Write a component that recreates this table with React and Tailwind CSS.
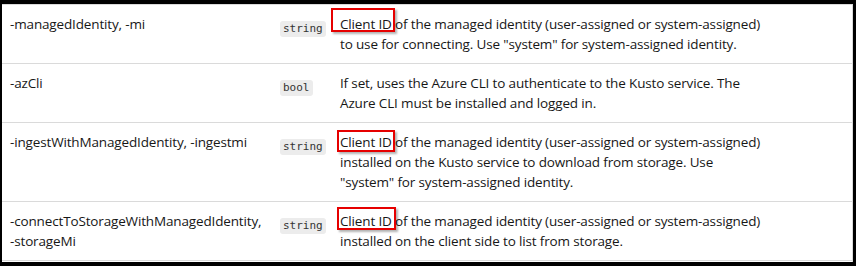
const rows = [
  {
    name: ["-managedIdentity, -mi"],
    type: "string",
    box: "-left-[9px] -right-[3px] -top-[7px] bottom-[1px]",
    desc: [
      "of the managed identity (user-assigned or system-assigned)",
      "to use for connecting. Use \"system\" for system-assigned identity.",
    ],
  },
  {
    name: ["-azCli"],
    type: "bool",
    desc: [
      "If set, uses the Azure CLI to authenticate to the Kusto service. The",
      "Azure CLI must be installed and logged in.",
    ],
  },
  {
    name: ["-ingestWithManagedIdentity, -ingestmi"],
    type: "string",
    box: "-left-[3px] -right-[3px] -top-[3px] -bottom-[1px]",
    desc: [
      "of the managed identity (user-assigned or system-assigned)",
      "installed on the Kusto service to download from storage. Use",
      "\"system\" for system-assigned identity.",
    ],
  },
  {
    name: ["-connectToStorageWithManagedIdentity,", "-storageMi"],
    type: "string",
    box: "-left-[3px] -right-[4px] -top-[5px] bottom-0",
    desc: [
      "of the managed identity (user-assigned or system-assigned)",
      "installed on the client side to list from storage.",
    ],
  },
];

function Row({ row }) {
  return (
    <div className="grid grid-cols-[278px_60px_1fr] border-b border-[#dadada] pt-[9px] pb-[9px]">
      <div className="pl-2">
        {row.name.map((n) => (
          <div key={n}>{n}</div>
        ))}
      </div>
      <div className="pt-[3px]">
        <code className="inline-block h-[16px] rounded-[3px] bg-[#ececec] px-[3px] text-[11px] leading-[16px] tracking-normal text-[#333] [font-family:'DejaVu_Sans_Mono',monospace]">
          {row.type}
        </code>
      </div>
      <div>
        {row.desc.map((line, i) => (
          <div key={i}>
            {i === 0 && row.box && (
              <span className="relative">
                Client ID
                <span
                  className={
                    "absolute border-2 border-[#e60000] shadow-[2px_2px_2px_rgba(0,0,0,0.3)] " +
                    row.box
                  }
                />
              </span>
            )}
            {i === 0 && row.box ? " " + line : line}
          </div>
        ))}
      </div>
    </div>
  );
}

export default function App() {
  return (
    <div className="h-[266px] w-[856px] bg-black pl-[2px] pr-[3px] pt-[4px] pb-[4px]">
      <div className="h-full border-t border-r border-[#dadada] bg-white text-[13.5px] leading-[20px] tracking-[-0.15px] text-[#171717] [font-family:'Open_Sans',sans-serif]">
        {rows.map((r, i) => (
          <Row key={i} row={r} />
        ))}
      </div>
    </div>
  );
}
